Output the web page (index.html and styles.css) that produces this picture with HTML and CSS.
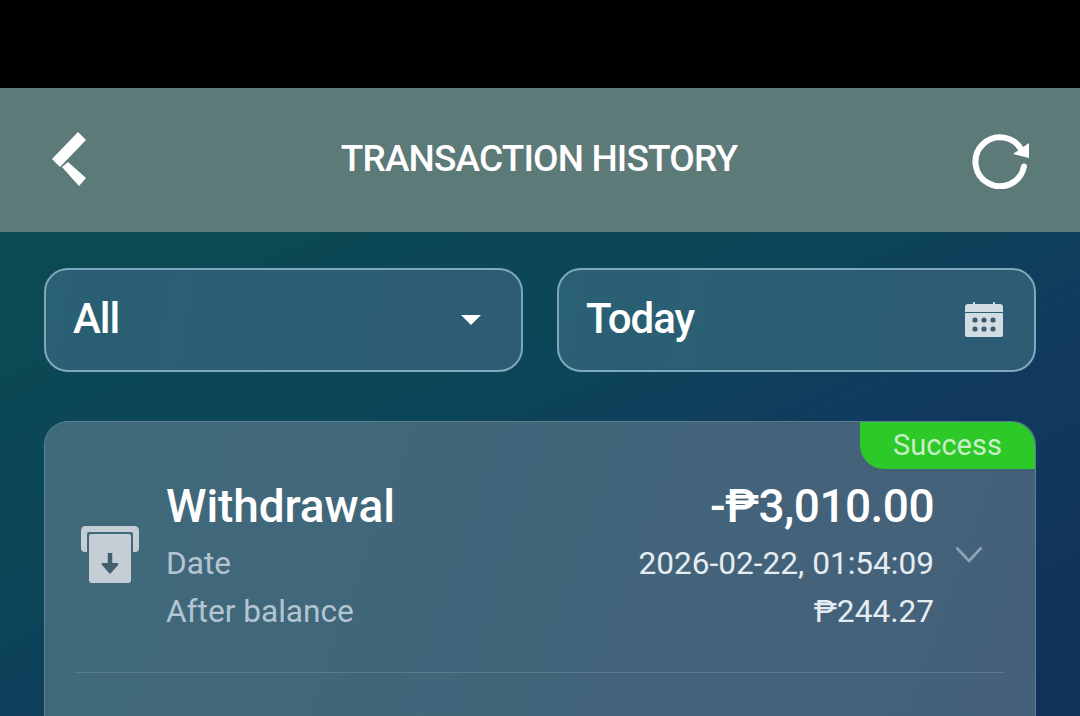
FILE: index.html
```html
<!DOCTYPE html>
<html lang="en">
<head>
<meta charset="utf-8">
<title>Transaction History</title>
<link rel="stylesheet" href="styles.css">
</head>
<body>
<div class="status-bar"></div>
<header class="header">
  <svg class="back-icon" viewBox="0 0 34 54" aria-hidden="true">
    <path d="M0 27 L26 0 L34 8 L8 35 Z" fill="#fff"/>
    <path d="M10 35 L16 30 L34 46 L27 54 Z" fill="#fff"/>
  </svg>
  <h1 class="title">TRANSACTION HISTORY</h1>
  <svg class="refresh-icon" viewBox="0 0 60 56" aria-hidden="true">
    <path d="M54 33.5 A24.5 24.5 0 1 1 52 18" fill="none" stroke="#fff" stroke-width="6" stroke-linecap="round"/>
    <path d="M43 21 L59 25 L59 10 Z" fill="#fff"/>
  </svg>
</header>
<main class="content">
  <div class="filters">
    <div class="filter">
      <span>All</span>
      <span class="caret"></span>
    </div>
    <div class="filter">
      <span>Today</span>
      <svg class="calendar-icon" viewBox="0 0 38 36" aria-hidden="true">
        <path d="M3 2 H8 V0 H10 V2 H28 V0 H30 V2 H35 Q38 2 38 5 V10 H0 V5 Q0 2 3 2 Z" fill="#d3dbe3"/>
        <path d="M0 11 H38 V33 Q38 35 35 35 H3 Q0 35 0 33 Z" fill="#d3dbe3"/>
        <g fill="#3d5a70">
          <circle cx="10" cy="18" r="2.6"/><circle cx="19" cy="18" r="2.6"/><circle cx="28" cy="18" r="2.6"/>
          <circle cx="10" cy="27" r="2.6"/><circle cx="19" cy="27" r="2.6"/><circle cx="28" cy="27" r="2.6"/>
        </g>
      </svg>
    </div>
  </div>
  <section class="card">
    <div class="badge">Success</div>
    <div class="row">
      <svg class="atm-icon" viewBox="0 0 58 58" aria-hidden="true">
        <path d="M5 0 H53 Q58 0 58 5 V22 Q58 26 54 26 H52 V8 Q52 6 50 6 H8 Q6 6 6 8 V26 H4 Q0 26 0 22 V5 Q0 0 5 0 Z" fill="#c5ced5"/>
        <path d="M10 8 H48 Q50 8 50 10 V54 Q50 57 47 57 H11 Q8 57 8 54 V10 Q8 8 10 8 Z" fill="#c5ced5"/>
        <path d="M29 27 V42" stroke="#42606f" stroke-width="4.5" fill="none"/>
        <path d="M21 37 H37 Q38 38 37 39 L30 47 Q29 48 28 47 L21 39 Q20 38 21 37 Z" fill="#42606f"/>
      </svg>
      <div class="labels">
        <div class="name">Withdrawal</div>
        <div class="label">Date</div>
        <div class="label">After balance</div>
      </div>
      <div class="values">
        <div class="amount">-₱3,010.00</div>
        <div class="value">2026-02-22, 01:54:09</div>
        <div class="value">₱244.27</div>
      </div>
      <svg class="chevron" viewBox="0 0 28 18" aria-hidden="true">
        <path d="M1.5 1.5 L14 15 L26.5 1.5" fill="none" stroke="#8fa3b3" stroke-width="2.6"/>
      </svg>
    </div>
    <div class="divider"></div>
  </section>
</main>
</body>
</html>
```

FILE: styles.css
```css
* { box-sizing: border-box; }

html, body {
  margin: 0;
  height: 716px;
  overflow: hidden;
  background: #000;
  font-family: Roboto, "Liberation Sans", sans-serif;
  color: #fff;
}

.status-bar {
  height: 88px;
  background: #000;
}

.header {
  height: 144px;
  background: #5b7a78;
  display: grid;
  grid-template-columns: 1fr auto 1fr;
  align-items: center;
  padding: 0 52px 0 50px;
}

.back-icon {
  width: 34px;
  height: 54px;
  margin: -3px 0 0 2px;
}

.refresh-icon {
  width: 60px;
  height: 56px;
  margin: 2px -2px 0 0;
  justify-self: end;
}

.title {
  margin: -3px 0 0;
  font-size: 37px;
  font-weight: 500;
  line-height: 44px;
  letter-spacing: -0.85px;
}

.content {
  height: 484px;
  padding: 36px 44px 0;
  background: linear-gradient(to bottom right, #0b4b52 0%, #0c4558 40%, #113a5f 60%, #11305a 100%);
}

.filters {
  display: grid;
  grid-template-columns: 479px 479px;
  gap: 34px;
}

.filter {
  height: 104px;
  border: 2px solid #7fa8bd;
  border-radius: 24px;
  background: linear-gradient(100deg, #2a6073 0%, #2d5c74 100%);
  display: flex;
  align-items: center;
  justify-content: space-between;
  padding: 0 31px 4px 27px;
  font-size: 42px;
  font-weight: 500;
  letter-spacing: -1px;
}

.caret {
  width: 0;
  height: 0;
  border-left: 10px solid transparent;
  border-right: 10px solid transparent;
  border-top: 10px solid #fff;
  margin: 4px 9px 0 0;
}

.calendar-icon {
  width: 38px;
  height: 36px;
  margin-top: 4px;
}

.card {
  margin-top: 49px;
  height: 320px;
  position: relative;
  border-radius: 24px;
  border: 1.5px solid #5a7f90;
  background: linear-gradient(110deg, #3f6a7a 0%, #45607a 100%);
  padding: 0 30px;
}

.badge {
  position: absolute;
  top: 0;
  right: 0;
  width: 175px;
  height: 47px;
  background: #2cc929;
  color: #c6f0c4;
  border-radius: 0 24px 0 24px;
  font-size: 29px;
  line-height: 47px;
  padding-left: 33px;
}

.row {
  display: flex;
  align-items: flex-start;
  height: 250px;
  padding-top: 56px;
}

.atm-icon {
  width: 58px;
  height: 58px;
  margin: 48px 27px 0 6px;
  flex: none;
}

.labels {
  flex: 1;
}

.values {
  text-align: right;
}

.name, .amount {
  font-size: 46px;
  font-weight: 500;
  line-height: 56px;
  margin-bottom: 6px;
  letter-spacing: -0.1px;
}

.amount {
  letter-spacing: -0.55px;
}

.label, .value {
  font-size: 31.6px;
  line-height: 48px;
}

.label {
  color: #b3c5d1;
}

.value {
  color: #e6edf2;
}

.chevron {
  width: 28px;
  height: 18px;
  margin: 68px 22px 0 21px;
  flex: none;
}

.divider {
  height: 1px;
  background: #5a7a8c;
}
```
